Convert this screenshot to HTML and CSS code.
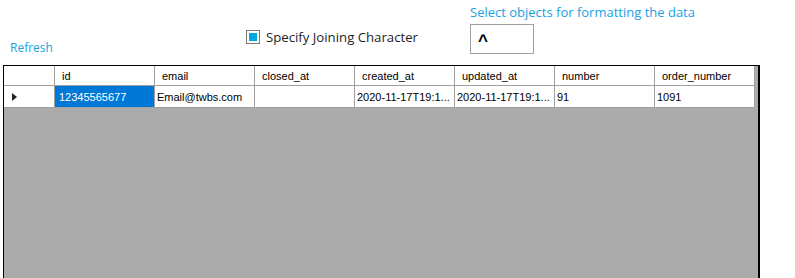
FILE: index.html
```html
<!DOCTYPE html>
<html>
<head>
<meta charset="utf-8">
<link rel="stylesheet" href="styles.css">
</head>
<body>
<div class="top">
  <div class="refresh">Refresh</div>
  <label class="check">
    <span class="box"><span class="fill"></span></span>
    <span class="check-text">Specify Joining Character</span>
  </label>
  <div class="fmt">
    <div class="fmt-label">Select objects for formatting the data</div>
    <div class="input">^</div>
  </div>
</div>
<div class="grid">
  <div class="rows">
    <div class="row head">
      <div class="cell rh"></div>
      <div class="cell">id</div>
      <div class="cell">email</div>
      <div class="cell">closed_at</div>
      <div class="cell">created_at</div>
      <div class="cell">updated_at</div>
      <div class="cell">number</div>
      <div class="cell">order_number</div>
    </div>
    <div class="row data">
      <div class="cell rh"><span class="arrow"></span></div>
      <div class="cell sel">12345565677</div>
      <div class="cell">Email@twbs.com</div>
      <div class="cell"></div>
      <div class="cell">2020-11-17T19:1...</div>
      <div class="cell">2020-11-17T19:1...</div>
      <div class="cell">91</div>
      <div class="cell">1091</div>
    </div>
  </div>
</div>
</body>
</html>
```
FILE: styles.css
```css
html, body {
  margin: 0;
  padding: 0;
  background: #ffffff;
  overflow: hidden;
}
body {
  width: 795px;
  height: 278px;
  font-family: "Open Sans", "Noto Sans", sans-serif;
}
.top {
  display: flex;
  align-items: flex-start;
  height: 65px;
}
.refresh {
  margin-left: 10px;
  width: 236px;
  margin-top: 40px;
  font-size: 12px;
  line-height: 16px;
  color: #1ba1e2;
}
.check {
  display: flex;
  align-items: center;
  width: 224px;
  margin-top: 28px;
}
.box {
  box-sizing: border-box;
  width: 14px;
  height: 14px;
  border: 1px solid #7a7a7a;
  padding: 2px;
  display: flex;
}
.fill {
  flex: 1;
  background: #00a8e0;
}
.check-text {
  margin-left: 6px;
  font-size: 13.2px;
  line-height: 18px;
  color: #1e1e1e;
}
.fmt {
  display: flex;
  flex-direction: column;
  margin-top: 3px;
}
.fmt-label {
  font-size: 13px;
  line-height: 18px;
  color: #1ba1e2;
}
.input {
  box-sizing: border-box;
  margin-top: 3px;
  width: 64px;
  height: 30px;
  border: 1px solid #a0a0a0;
  padding: 6px 0 0 7px;
  font-family: "Liberation Sans", Arial, sans-serif;
  font-weight: bold;
  font-size: 17px;
  line-height: 20px;
  color: #000;
}
.grid {
  box-sizing: border-box;
  margin-left: 3px;
  width: 757px;
  height: 213px;
  border: 1px solid #000;
  border-bottom: none;
  border-right-width: 2px;
  background: #ababab;
}
.row {
  display: grid;
  grid-template-columns: 51px repeat(7, 100px);
  width: 751px;
  background: #fff;
}
.cell {
  box-sizing: border-box;
  border-right: 1px solid #a0a0a0;
  border-bottom: 1px solid #a0a0a0;
  font-family: "Liberation Sans", Arial, sans-serif;
  font-size: 11px;
  color: #000;
  white-space: nowrap;
  overflow: hidden;
}
.head .cell {
  height: 20px;
  line-height: 20px;
  padding-left: 7px;
}
.data .cell {
  height: 22px;
  line-height: 22px;
  padding-left: 2px;
}
.cell.sel {
  background: #0078d7;
  color: #fff;
  padding-left: 4px;
}
.rh {
  position: relative;
}
.arrow {
  position: absolute;
  left: 8px;
  top: 7px;
  width: 0;
  height: 0;
  border-top: 4px solid transparent;
  border-bottom: 4px solid transparent;
  border-left: 5px solid #222;
}
```
